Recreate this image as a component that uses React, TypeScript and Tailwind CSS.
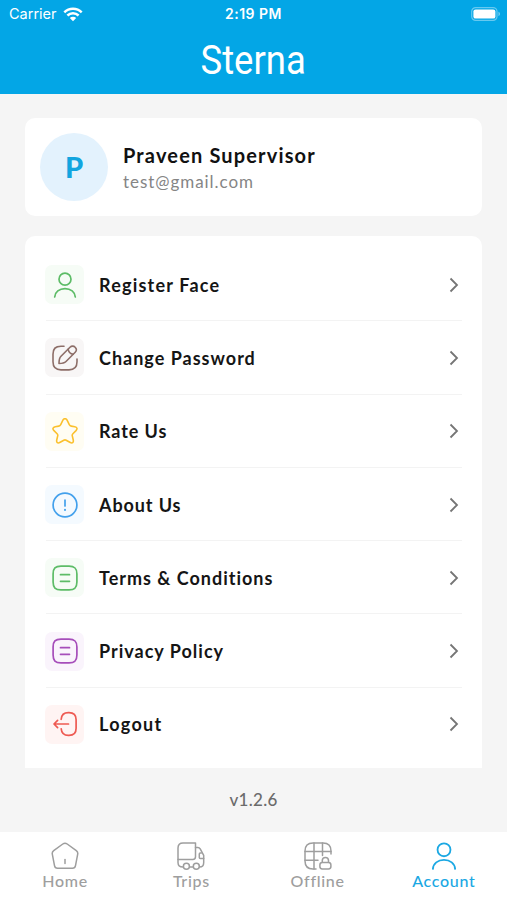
import type { ReactNode } from 'react';

const FONT = "font-['Lato',sans-serif]";

function UserIcon({ size = 24 }: { size?: number }) {
  return (
    <svg width={size} height={size} viewBox="0 0 26 26" fill="none" stroke="currentColor" strokeWidth="1.700" strokeLinecap="round">
      <circle cx="13" cy="7.200" r="6" />
      <path d="M2.700 25c.3-5 4.600-8.400 10.300-8.400S23 20 23.300 25" />
    </svg>
  );
}

function EditIcon() {
  return (
    <svg width="26" height="26" viewBox="0 0 26 26" fill="none" stroke="currentColor" strokeWidth="1.600" strokeLinecap="round" strokeLinejoin="round">
      <path d="M12 1.200H9C3.300 1.200 1 3.500 1 9.200v7.600C1 22.500 3.300 24.900 9 24.900h8c5.700 0 8-2.400 8-8.100V14" />
      <path d="M18 2.300 9 11.300c-1.500 1.500-2 4.300-2 7.200 2.900 0 5.500-.5 7-2l9.200-9.200c1.600-1.600 1.600-3.500 0-5-1.500-1.600-3.600-1.600-5.200 0Z" />
      <path d="M16.200 4.300c.5 2.600 2.500 4.500 5 5" />
    </svg>
  );
}

function StarIcon() {
  return (
    <svg width="26" height="26" viewBox="0 0 26 26" fill="none" stroke="currentColor" strokeWidth="1.600" strokeLinejoin="round">
      <path d="M10.900 2.200c1.100-2 3.100-2 4.200 0l2.300 4.600c.3.700 1.100 1.200 1.800 1.300l3.600.6c2.400.4 2.900 2.100 1.200 3.900l-3.100 3.100c-.6.600-.8 1.500-.6 2.200l.9 3.900c.7 2.900-.9 4-3.400 2.500l-3.600-2.100c-.7-.4-1.700-.4-2.400 0l-3.600 2.100c-2.500 1.500-4.100.3-3.400-2.500l.9-3.900c.2-.7 0-1.600-.6-2.200L2 12.600C.3 10.900.8 9.200 3.200 8.700l3.600-.6c.7-.1 1.500-.6 1.800-1.300Z" />
    </svg>
  );
}

function InfoIcon() {
  return (
    <svg width="26" height="26" viewBox="0 0 26 26" fill="none" stroke="currentColor" strokeWidth="1.700" strokeLinecap="round">
      <circle cx="13" cy="13" r="11.900" />
      <path d="M13 8v6" />
      <path d="M13 17.800v.2" strokeWidth="2" />
    </svg>
  );
}

function DocIcon() {
  return (
    <svg width="26" height="26" viewBox="0 0 26 26" fill="none" stroke="currentColor" strokeWidth="1.700" strokeLinecap="round">
      <path d="M9 1.100h8c5.700 0 7.900 2.300 7.900 7.900v8c0 5.700-2.200 7.900-7.900 7.900H9c-5.700 0-7.900-2.200-7.900-7.900V9C1.100 3.400 3.300 1.100 9 1.100Z" />
      <path d="M8.500 9.700h9M8.500 16.300h9" />
    </svg>
  );
}

function LogoutIcon() {
  return (
    <svg width="26" height="26" viewBox="0 0 26 26" fill="none" stroke="currentColor" strokeWidth="1.700" strokeLinecap="round" strokeLinejoin="round">
      <path d="M9.200 8.300c.3-4.800 2.500-6.700 7.200-6.700h.6c5 0 7.100 2.100 7.100 7.100v8.600c0 5-2.100 7.100-7.100 7.100h-.6c-4.700 0-6.900-2-7.200-6.600" />
      <path d="M16.500 13H2.500M5.600 9.300 2 13l3.600 3.700" />
    </svg>
  );
}

function ChevronIcon() {
  return (
    <svg width="10" height="16" viewBox="0 0 10 16" fill="none" stroke="currentColor" strokeWidth="1.800">
      <path d="m1.500 1.500 6.500 6.500-6.500 6.500" />
    </svg>
  );
}

function HomeIcon() {
  return (
    <svg width="28" height="28" viewBox="0 0 28 28" fill="none" stroke="currentColor" strokeWidth="1.500" strokeLinecap="round" strokeLinejoin="round">
      <path d="M11.800 2 2.700 8.700C1.500 9.600 1 10.800 1.300 12.200l2.200 11.500c.3 1.700 1.400 2.600 3 2.600h15c1.600 0 2.700-.9 3-2.600l2.200-11.500c.3-1.400-.2-2.600-1.400-3.500L16.200 2c-1.400-1-3-1-4.400 0Z" />
      <path d="M14 17.500v4" />
    </svg>
  );
}

function TruckIcon() {
  return (
    <svg width="28" height="28" viewBox="0 0 28 28" fill="none" stroke="currentColor" strokeWidth="1.500" strokeLinecap="round" strokeLinejoin="round">
      <path d="M18.500 1v13.700c0 1.700-1 2.700-2.700 2.700H1V6c0-3.300 1.700-5 5-5Z" />
      <path d="M18.500 5.500h2.300c1 0 1.900.5 2.400 1.400l3.500 6.500v7c0 3-1.600 4.600-4.100 4.600M1 17.400v3c0 3 1.700 4.600 5 4.600M12.700 25h3.200" />
      <path d="M24.300 11h-1c-.7 0-1 .4-1 1v3.600c0 .7.400 1 1 1h3.400" />
      <circle cx="9.400" cy="24.200" r="3" />
      <circle cx="19.300" cy="24.200" r="3" />
    </svg>
  );
}

function OfflineIcon() {
  return (
    <svg width="28" height="28" viewBox="0 0 28 28" fill="none" stroke="currentColor" strokeWidth="1.500" strokeLinecap="round" strokeLinejoin="round">
      <path d="M27 12V9c0-5.500-2.500-8-8-8H9C3.500 1 1 3.500 1 9v10c0 5.500 2.500 8 8 8h3" />
      <path d="M10 1v26M18.500 1v12.500M1 9.500h26M1 18.300h13" />
      <path d="M18.300 20.500h6.200c1.500 0 2.400.9 2.400 2.400v1.700c0 1.500-.9 2.400-2.400 2.400h-6.200c-1.500 0-2.400-.9-2.400-2.400v-1.700c0-1.500.9-2.400 2.400-2.400Z" />
      <path d="M18.300 20.300v-1.700c0-2 1.200-3.100 3.100-3.100s3.100 1.100 3.100 3.100v1.700" />
    </svg>
  );
}

interface MenuItem {
  label: string;
  icon: ReactNode;
  tile: string;
  text: string;
}

const menuItems: MenuItem[] = [
  { label: 'Register Face', icon: <UserIcon size={26} />, tile: 'bg-[#f6fcf6] text-[#5dbc67]', text: 'tracking-[1.2px]' },
  { label: 'Change Password', icon: <EditIcon />, tile: 'bg-[#f8f6f6] text-[#8d6e68]', text: 'tracking-[1px]' },
  { label: 'Rate Us', icon: <StarIcon />, tile: 'bg-[#fffdf3] text-[#fbc02d]', text: 'tracking-[0.9px]' },
  { label: 'About Us', icon: <InfoIcon />, tile: 'bg-[#f4faff] text-[#42a0ec]', text: 'tracking-[0.9px]' },
  { label: 'Terms & Conditions', icon: <DocIcon />, tile: 'bg-[#f6fcf6] text-[#5dbc67]', text: 'tracking-[1px]' },
  { label: 'Privacy Policy', icon: <DocIcon />, tile: 'bg-[#faf4fc] text-[#a64dba]', text: 'tracking-[1px]' },
  { label: 'Logout', icon: <LogoutIcon />, tile: 'bg-[#fff4f3] text-[#ee5a52]', text: 'tracking-[1.300px]' }
];

const tabs = [
  { label: 'Home', icon: <HomeIcon />, color: 'text-[#9e9e9e]' },
  { label: 'Trips', icon: <TruckIcon />, color: 'text-[#9e9e9e]' },
  { label: 'Offline', icon: <OfflineIcon />, color: 'text-[#9e9e9e]' },
  { label: 'Account', icon: <UserIcon size={28} />, color: 'text-[#1ba8e3]' }
];

export default function App() {
  return (
    <div className={`flex h-[900px] w-[507px] flex-col overflow-hidden bg-[#f5f5f5] ${FONT}`}>
      {/* Header */}
      <header className="flex h-[94px] shrink-0 flex-col bg-[#03a6e6] text-white">
        <div className="grid h-[28px] grid-cols-3 items-center pr-[6px] pl-[9px] font-['Inter',sans-serif] text-[14.5px] leading-none">
          <div className="flex items-center gap-[6px]">
            <span>Carrier</span>
            <svg width="20" height="15" viewBox="0 0 20 15" fill="none" stroke="currentColor" strokeWidth="2.500">
              <path d="M1.300 5.300a12.500 12.500 0 0 1 17.400 0M4.400 8.500a8 8 0 0 1 11.200 0" />
              <path d="M10 14.300 6.800 11a4.600 4.600 0 0 1 6.400 0Z" fill="currentColor" stroke="none" />
            </svg>
          </div>
          <span className="-ml-[3px] text-center text-[14px] font-semibold tracking-[0.5px]">2:19 PM</span>
          <svg className="justify-self-end" width="30" height="15" viewBox="0 0 30 15">
            <rect x=".7" y=".6" width="25.300" height="12.800" rx="4" fill="none" stroke="#fff" strokeOpacity=".4" strokeWidth="1.200" />
            <rect x="2.400" y="2.400" width="22" height="9.200" rx="2.200" fill="#fff" />
            <path d="M27.500 4.800v4.400c1.900-.7 1.900-3.700 0-4.400Z" fill="#fff" fillOpacity=".5" />
          </svg>
        </div>
        <div className="flex h-[64px] items-center justify-center">
          <span className="scale-x-[0.89] font-['Roboto',sans-serif] text-[41px] leading-none font-normal">Sterna</span>
        </div>
      </header>

      <main className="flex min-h-0 flex-1 flex-col px-[25px] pt-6">
        {/* Profile */}
        <section className="flex h-[98px] shrink-0 items-center gap-[15px] rounded-[10px] bg-white pl-[15px]">
          <div className="flex size-[68px] items-center justify-center rounded-full bg-[#e3f2fd] text-[29px] font-black text-[#12a5df]">P</div>
          <div className="pt-[2px]">
            <h1 className="text-[20px] leading-[27px] font-bold tracking-[1.150px] text-[#111]">Praveen Supervisor</h1>
            <p className="text-[17px] leading-[26px] tracking-[0.950px] text-[#858585]">test@gmail.com</p>
          </div>
        </section>

        {/* Menu */}
        <section className="mt-5 h-[532px] shrink-0 rounded-t-[10px] bg-white px-5 pt-3">
          {menuItems.map((item, index) => (
            <div
              key={item.label}
              className={`flex h-[73.300px] items-center ${index < menuItems.length - 1 ? 'bg-[linear-gradient(#f3f3f3,#f3f3f3)] bg-[length:calc(100%-1px)_1px] bg-bottom bg-no-repeat' : ''}`}
            >
              <span className={`flex size-[39px] items-center justify-center rounded-[7px] ${item.tile}`}>{item.icon}</span>
              <span className={`ml-[15px] pt-px text-[18px] font-bold text-[#151515] ${item.text}`}>{item.label}</span>
              <span className="mr-[3px] ml-auto text-[#757575]">
                <ChevronIcon />
              </span>
            </div>
          ))}
        </section>

        <p className="flex h-16 items-center justify-center text-[17px] font-medium tracking-[0.300px] text-[#6b6b6b]">v1.2.6</p>
      </main>

      {/* Tab bar */}
      <nav className="grid h-[68px] shrink-0 grid-cols-4 bg-white pt-[10px] pl-[2px]">
        {tabs.map(tab => (
          <div key={tab.label} className={`flex flex-col items-center ${tab.color}`}>
            {tab.icon}
            <span className="mt-[2px] text-[16px] leading-[17px] font-medium tracking-[0.700px]">{tab.label}</span>
          </div>
        ))}
      </nav>
    </div>
  );
}
